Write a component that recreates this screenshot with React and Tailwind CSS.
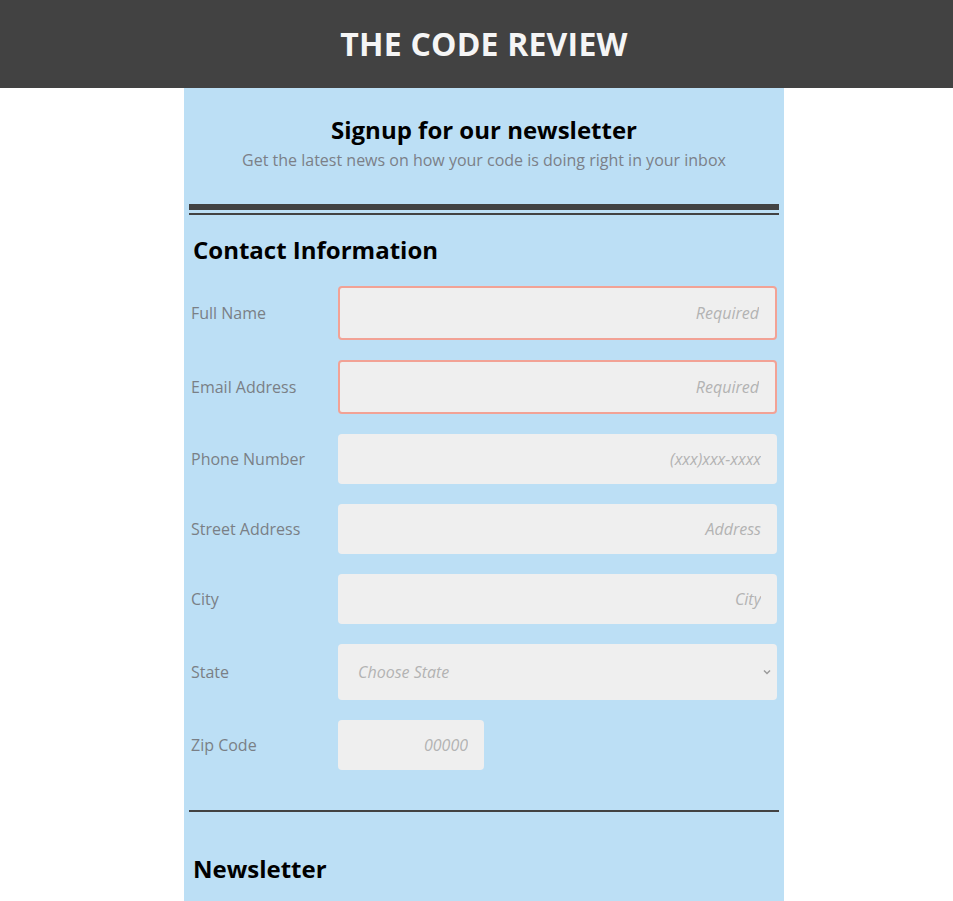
import { useState } from "react"

const fields = [
    { label: "Full Name", placeholder: "Required", required: true },
    { label: "Email Address", placeholder: "Required", required: true },
    { label: "Phone Number", placeholder: "(xxx)xxx-xxxx" },
    { label: "Street Address", placeholder: "Address" },
    { label: "City", placeholder: "City" },
]

function Row({ label, children }) {
    return (
        <div className="flex items-center pl-[7px] pr-[7px]">
            <label className="w-[147px] shrink-0 text-[16px] text-[#7a7f86]">{label}</label>
            {children}
        </div>
    )
}

export default function App() {
    const [state, setState] = useState("")

    return (
        <div className="min-h-screen bg-white font-['Open_Sans',sans-serif]">
            <header className="h-[88px] bg-[#424242] flex items-center justify-center pl-[15px]">
                <h1 className="text-[32px] font-bold text-[#f5f5f5] leading-none tracking-[0.2px]">THE CODE REVIEW</h1>
            </header>

            <div className="pl-[15px]">
                <main className="w-[600px] mx-auto bg-[#bcdff5] pb-4">
                    {/* intro */}
                    <div className="pt-[26px] text-center">
                        <h2 className="text-[24px] font-bold leading-[32px] text-black">Signup for our newsletter</h2>
                        <p className="mt-[3px] text-[16px] leading-[22px] text-[#7b8088]">Get the latest news on how your code is doing right in your inbox</p>
                    </div>

                    <div className="mx-[5px] mt-[33px]">
                        <div className="h-[6px] bg-[#424242]"></div>
                        <div className="h-[2px] mt-[3px] bg-[#424242]"></div>
                    </div>

                    {/* contact info */}
                    <h3 className="mt-[19px] pl-[9px] text-[24px] font-bold leading-[32px] text-black">Contact Information</h3>

                    <div className="mt-[20px] flex flex-col gap-[20px]">
                        {fields.map((f) => (
                            <Row key={f.label} label={f.label}>
                                <input
                                    type="text"
                                    placeholder={f.placeholder}
                                    className={
                                        "flex-1 rounded-[4px] bg-[#efefef] text-right pr-4 text-[16px] outline-none placeholder:italic placeholder:text-[#b3b3b3] " +
                                        (f.required ? "h-[54px] border-2 border-[#f2a295]" : "h-[50px]")
                                    }
                                />
                            </Row>
                        ))}

                        <Row label="State">
                            <div className="relative flex-1">
                                <select
                                    value={state}
                                    onChange={(e) => setState(e.target.value)}
                                    className="w-full h-[56px] appearance-none rounded-[4px] bg-[#efefef] pl-5 text-[16px] italic text-[#b3b3b3] outline-none"
                                >
                                    <option value="">Choose State</option>
                                    <option value="CA">California</option>
                                    <option value="NY">New York</option>
                                    <option value="TX">Texas</option>
                                </select>
                                <svg className="absolute right-[5px] top-1/2 -translate-y-1/2 pointer-events-none" width="10" height="10" viewBox="0 0 10 10">
                                    <path d="M2 3.5 L5 6.5 L8 3.5" fill="none" stroke="#9a9a9a" strokeWidth="1.5" />
                                </svg>
                            </div>
                        </Row>

                        <Row label="Zip Code">
                            <input
                                type="text"
                                placeholder="00000"
                                className="w-[146px] h-[50px] rounded-[4px] bg-[#efefef] text-right pr-4 text-[16px] outline-none placeholder:italic placeholder:text-[#b3b3b3]"
                            />
                        </Row>
                    </div>

                    <div className="mx-[5px] mt-[40px] h-[2px] bg-[#424242]"></div>

                    {/* newsletter */}
                    <h3 className="mt-[41px] pl-[9px] text-[24px] font-bold leading-[32px] text-black">Newsletter</h3>
                </main>
            </div>
        </div>
    )
}
